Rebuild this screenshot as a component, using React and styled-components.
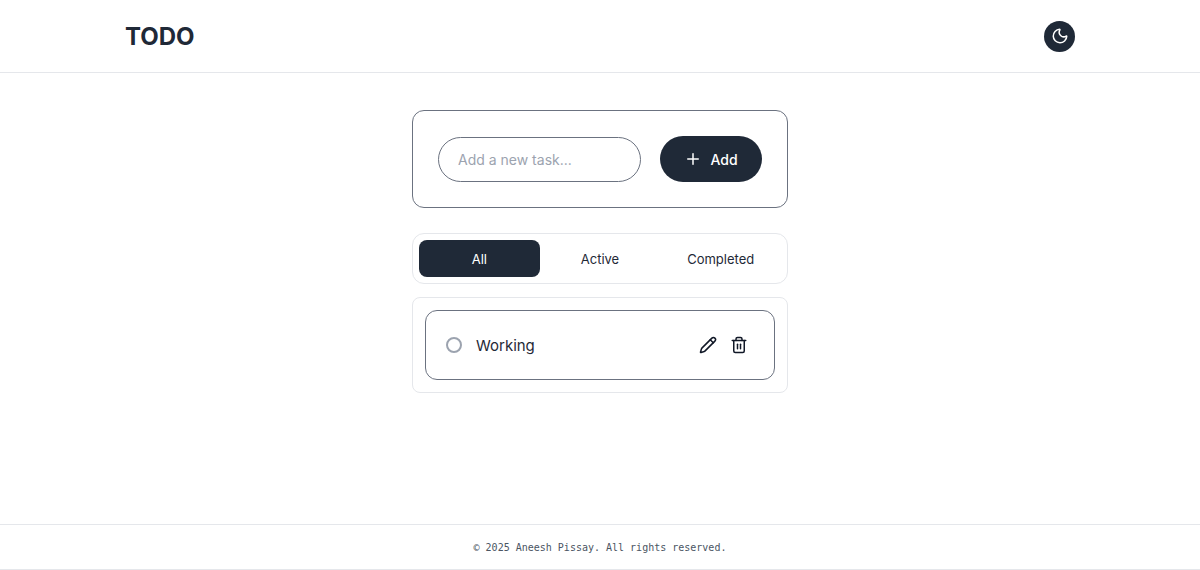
import React from 'react';
import styled, { createGlobalStyle } from 'styled-components';
import { Moon, Plus, Pencil, Trash2 } from 'lucide-react';

const GlobalStyle = createGlobalStyle`
  html, body {
    margin: 0;
    padding: 0;
    background: #fff;
    font-family: Inter, "Liberation Sans", sans-serif;
    color: #1f2937;
  }
  * {
    box-sizing: border-box;
  }
`;

const Page = styled.div`
  height: 570px;
  display: flex;
  flex-direction: column;
  overflow: hidden;
`;

const Header = styled.header`
  height: 73px;
  flex-shrink: 0;
  border-bottom: 1px solid #e5e7eb;
  display: flex;
  align-items: center;
  justify-content: space-between;
  padding: 0 125px;
`;

const Logo = styled.h1`
  margin: 0;
  font-size: 24px;
  font-weight: 700;
  color: #1f2937;
`;

const ThemeButton = styled.button`
  width: 31px;
  height: 31px;
  border: none;
  border-radius: 50%;
  padding: 0;
  background: #1f2937;
  color: #fff;
  display: flex;
  align-items: center;
  justify-content: center;
`;

const Main = styled.main`
  flex: 1;
  width: 376px;
  margin: 0 auto;
  padding-top: 37px;
  display: flex;
  flex-direction: column;
`;

const AddCard = styled.form`
  height: 98px;
  border: 1px solid #6b7280;
  border-radius: 12px;
  padding: 0 25px;
  display: flex;
  align-items: center;
  gap: 19px;
  margin-bottom: 25px;
`;

const TaskInput = styled.input`
  flex: 1;
  min-width: 0;
  height: 45px;
  border: 1px solid #6b7280;
  border-radius: 9999px;
  padding: 0 19px;
  font: 400 14px Inter, sans-serif;
  color: #1f2937;
  outline: none;

  &::placeholder {
    color: #9ca3af;
    opacity: 1;
  }
`;

const AddButton = styled.button`
  width: 102px;
  height: 46px;
  border: none;
  border-radius: 9999px;
  background: #1f2937;
  color: #fff;
  font: 500 14px Inter, sans-serif;
  display: flex;
  align-items: center;
  justify-content: center;
  gap: 8px;
`;

const Tabs = styled.div`
  height: 51px;
  border: 1px solid #e5e7eb;
  border-radius: 12px;
  padding: 6px;
  display: grid;
  grid-template-columns: repeat(3, 1fr);
  gap: 0;
  margin-bottom: 13px;
`;

const Tab = styled.button`
  border: none;
  border-radius: 8px;
  background: ${(p) => (p.$active ? '#1f2937' : 'transparent')};
  color: ${(p) => (p.$active ? '#fff' : '#1f2937')};
  font: 400 13px Inter, sans-serif;
  padding: 0;
`;

const ListCard = styled.div`
  height: 96px;
  border: 1px solid #e5e7eb;
  border-radius: 8px;
  padding: 12px;
`;

const TodoRow = styled.div`
  height: 70px;
  border: 1px solid #6b7280;
  border-radius: 12px;
  padding: 0 26px 0 20px;
  display: flex;
  align-items: center;
`;

const Circle = styled.span`
  width: 16px;
  height: 16px;
  border: 2px solid #9ca3af;
  border-radius: 50%;
  margin-right: 14px;
`;

const TodoText = styled.span`
  flex: 1;
  font-size: 15px;
  color: #1f2937;
`;

const IconButton = styled.button`
  width: 18px;
  height: 18px;
  border: none;
  background: none;
  padding: 0;
  margin-left: 13px;
  color: #111827;
  display: flex;
  align-items: center;
  justify-content: center;
`;

const Footer = styled.footer`
  height: 46px;
  flex-shrink: 0;
  border-top: 1px solid #e5e7eb;
  border-bottom: 1px solid #e5e7eb;
  display: flex;
  align-items: center;
  justify-content: center;
  font-family: "DejaVu Sans Mono", monospace;
  font-size: 10px;
  color: #4b5563;
`;

export default function App() {
  return (
    <Page>
      <GlobalStyle />
      <Header>
        <Logo>TODO</Logo>
        <ThemeButton aria-label="Toggle theme">
          <Moon size={18} />
        </ThemeButton>
      </Header>
      <Main>
        <AddCard>
          <TaskInput placeholder="Add a new task..." />
          <AddButton type="button">
            <Plus size={18} />
            Add
          </AddButton>
        </AddCard>
        <Tabs>
          <Tab $active>All</Tab>
          <Tab>Active</Tab>
          <Tab>Completed</Tab>
        </Tabs>
        <ListCard>
          <TodoRow>
            <Circle />
            <TodoText>Working</TodoText>
            <IconButton aria-label="Edit">
              <Pencil size={18} />
            </IconButton>
            <IconButton aria-label="Delete">
              <Trash2 size={18} />
            </IconButton>
          </TodoRow>
        </ListCard>
      </Main>
      <Footer>© 2025 Aneesh Pissay. All rights reserved.</Footer>
    </Page>
  );
}
